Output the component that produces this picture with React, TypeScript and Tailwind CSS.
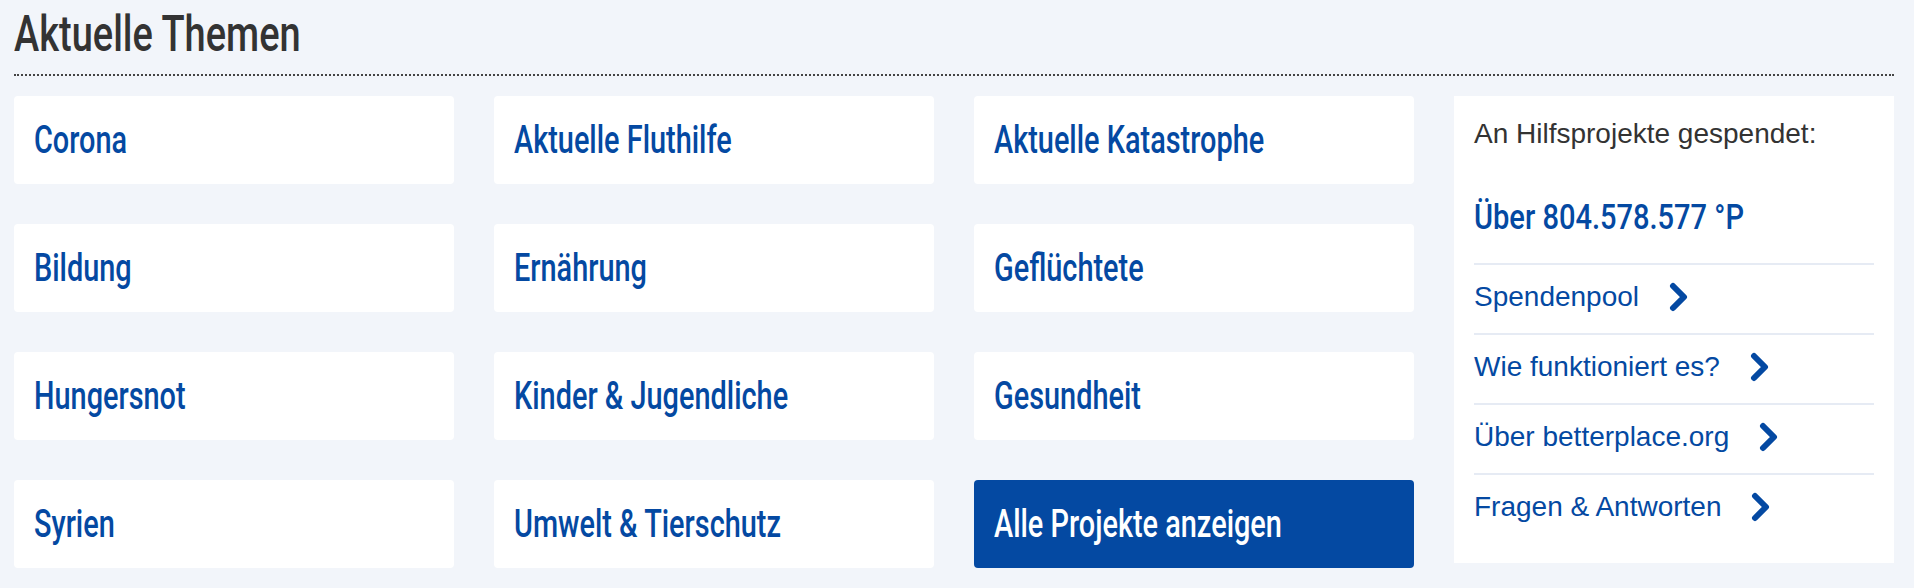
import React from "react";

const topics = [
  "Corona",
  "Aktuelle Fluthilfe",
  "Aktuelle Katastrophe",
  "Bildung",
  "Ernährung",
  "Geflüchtete",
  "Hungersnot",
  "Kinder & Jugendliche",
  "Gesundheit",
  "Syrien",
  "Umwelt & Tierschutz",
];

const links = [
  "Spendenpool",
  "Wie funktioniert es?",
  "Über betterplace.org",
  "Fragen & Antworten",
];

const condensed = "font-['Roboto',sans-serif] font-medium inline-block origin-left scale-x-[0.76] whitespace-nowrap";

function Chevron() {
  return (
    <svg width="20" height="30" viewBox="0 0 20 30" className="ml-[30px] shrink-0">
      <polyline
        points="4,4 15,15 4,26"
        fill="none"
        stroke="#0449a2"
        strokeWidth="6"
        strokeLinecap="round"
        strokeLinejoin="round"
      />
    </svg>
  );
}

function TopicBox({ label, active }: { label: string; active?: boolean }) {
  return (
    <a
      href="#"
      className={
        active
          ? "flex h-[88px] items-center rounded bg-[#0449a2] pl-5 text-white"
          : "flex h-[88px] items-center rounded bg-white pl-5 text-[#0449a2]"
      }
    >
      <span className={`${condensed} text-[38px] leading-[44px]`}>{label}</span>
    </a>
  );
}

export default function App() {
  return (
    <div className="h-[588px] w-full overflow-hidden bg-[#f2f5fa] pl-[14px] pr-[20px]">
      <header className="pt-1">
        <h2 className="h-[60px] text-[#333333]">
          <span className={`${condensed} text-[50px] leading-[60px]`}>Aktuelle Themen</span>
        </h2>
        <div className="mt-[10px] border-b-2 border-dotted border-[#444444]" />
      </header>

      <div className="mt-5 flex items-start gap-10">
        <div className="grid flex-1 grid-cols-3 gap-10">
          {topics.map((t) => (
            <TopicBox key={t} label={t} />
          ))}
          <TopicBox label="Alle Projekte anzeigen" active />
        </div>

        <aside className="w-[440px] shrink-0 bg-white px-5 pt-5 pb-5 font-['Liberation_Sans',Arial,sans-serif]">
          <p className="text-[28px] leading-[36px] text-[#333333]">An Hilfsprojekte gespendet:</p>
          <div className="border-b-2 border-[#e6ebf4] pt-[44px] pb-[23px] text-[#0449a2]">
            <span className="inline-block origin-left scale-x-[0.83] whitespace-nowrap font-['Roboto',sans-serif] text-[35px] font-medium leading-[44px]">
              Über 804.578.577 °P
            </span>
          </div>
          <ul>
            {links.map((l, i) => (
              <li
                key={l}
                className={
                  i < links.length - 1
                    ? "h-[70px] border-b-2 border-[#e6ebf4] pt-3"
                    : "h-[68px] pt-3"
                }
              >
                <a href="#" className="flex items-center text-[28px] leading-[40px] text-[#0449a2]">
                  {l}
                  <Chevron />
                </a>
              </li>
            ))}
          </ul>
        </aside>
      </div>
    </div>
  );
}
